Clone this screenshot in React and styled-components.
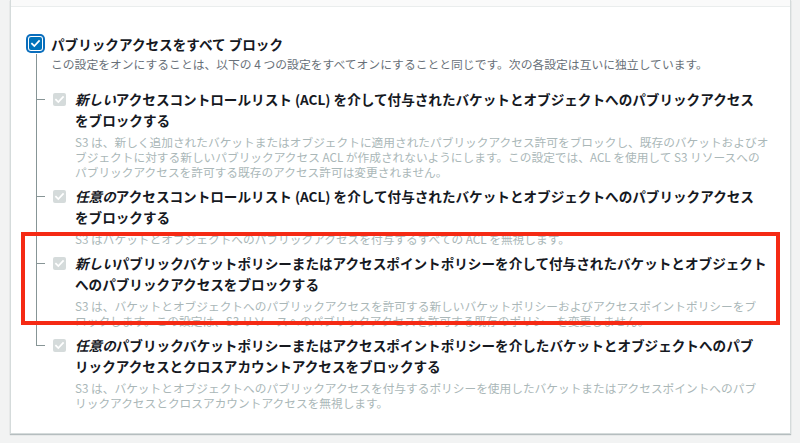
import React from "react";
import styled, { createGlobalStyle, css } from "styled-components";

const Global = createGlobalStyle`
  html, body { margin: 0; padding: 0; background: #f2f3f3; }
  body { font-family: "Noto Sans CJK JP", "Noto Sans", sans-serif; color: #16191f; }
  * { box-sizing: border-box; }
`;

const Page = styled.div`
  width: 800px;
  height: 443px;
  padding: 0 9px 0 10px;
  background: #f2f3f3;
  overflow: hidden;
`;

const Panel = styled.section`
  background: #ffffff;
  border: 1px solid #d5dbdb;
  border-top: none;
  box-shadow: 0 1px 1px 0 rgba(0, 28, 36, 0.25);
`;

const PanelHeader = styled.div`
  height: 7px;
  background: #fafafa;
  border-bottom: 1px solid #eaeded;
`;

const PanelBody = styled.div`
  padding: 27px 15px 23px 15px;
`;

const MainRow = styled.div`
  display: flex;
  align-items: flex-start;
  gap: 6px;
`;

const MainCheck = styled.span`
  flex-shrink: 0;
  width: 13px;
  height: 13px;
  margin: 3px 3px 0 3px;
  border-radius: 2px;
  background: #0073bb;
  box-shadow: 0 0 0 1px #ffffff, 0 0 0 3px #0a6ebd;
  display: flex;
  align-items: center;
  justify-content: center;
`;

const MainText = styled.div`
  display: flex;
  flex-direction: column;
`;

const MainTitle = styled.div`
  font-size: 13.6px;
  line-height: 21.5px;
  font-weight: 700;
  color: #16191f;
  white-space: nowrap;
`;

const MainDesc = styled.div`
  font-size: 11.8px;
  line-height: 15px;
  color: #687078;
  white-space: nowrap;
`;

const List = styled.ul`
  position: relative;
  list-style: none;
  margin: 0;
  padding: 0;
  &::before {
    content: "";
    position: absolute;
    left: 10px;
    top: -17px;
    height: 17px;
    width: 1px;
    background: #879596;
  }
`;

const Item = styled.li`
  --pt: ${(p) => (p.$first ? "18px" : "7px")};
  position: relative;
  display: flex;
  align-items: flex-start;
  gap: 9px;
  padding: var(--pt) 0 0 27px;
  &::before {
    content: "";
    position: absolute;
    left: 10px;
    top: 0;
    width: 1px;
    background: #879596;
    ${(p) =>
      p.$last
        ? css`height: calc(var(--pt) + 11px);`
        : css`bottom: 0;`}
  }
  &::after {
    content: "";
    position: absolute;
    left: 10px;
    top: calc(var(--pt) + 10.5px);
    width: 9px;
    height: 1px;
    background: #879596;
  }
`;

const HighlightFrame = styled.span`
  position: absolute;
  top: -14px;
  bottom: 3px;
  left: -5px;
  right: -5px;
  border: 4px solid #f52a14;
  pointer-events: none;
  z-index: 2;
`;

const ItemCheck = styled.span`
  flex-shrink: 0;
  width: 13px;
  height: 13px;
  margin-top: 4.25px;
  border-radius: 2px;
  background: #d5dbdb;
  display: flex;
  align-items: center;
  justify-content: center;
`;

const ItemBody = styled.div`
  display: flex;
  flex-direction: column;
`;

const ItemTitle = styled.div`
  font-size: 13.6px;
  line-height: 21.5px;
  font-weight: 700;
  color: #16191f;
  white-space: nowrap;
  em { font-style: italic; }
`;

const ItemDesc = styled.div`
  margin-top: 2px;
  font-size: 11.7px;
  line-height: 15px;
  color: #aab7b8;
  white-space: nowrap;
`;

const Check = ({ size = 11 }) => (
  <svg width={size} height={size} viewBox="0 0 14 14" fill="none">
    <path d="M2.5 7.2l3 3 6-6.4" stroke="#ffffff" strokeWidth="2.2" strokeLinecap="square" />
  </svg>
);

const items = [
  {
    em: "新しい",
    title: ["アクセスコントロールリスト (ACL) を介して付与されたバケットとオブジェクトへのパブリックアクセス", "をブロックする"],
    desc: [
      "S3 は、新しく追加されたバケットまたはオブジェクトに適用されたパブリックアクセス許可をブロックし、既存のバケットおよびオ",
      "ブジェクトに対する新しいパブリックアクセス ACL が作成されないようにします。この設定では、ACL を使用して S3 リソースへの",
      "パブリックアクセスを許可する既存のアクセス許可は変更されません。",
    ],
  },
  {
    em: "任意の",
    title: ["アクセスコントロールリスト (ACL) を介して付与されたバケットとオブジェクトへのパブリックアクセス", "をブロックする"],
    desc: ["S3 はバケットとオブジェクトへのパブリックアクセスを付与するすべての ACL を無視します。"],
  },
  {
    em: "新しい",
    highlight: true,
    title: ["パブリックバケットポリシーまたはアクセスポイントポリシーを介して付与されたバケットとオブジェクト", "へのパブリックアクセスをブロックする"],
    desc: [
      "S3 は、バケットとオブジェクトへのパブリックアクセスを許可する新しいバケットポリシーおよびアクセスポイントポリシーをブ",
      "ロックします。この設定は、S3 リソースへのパブリックアクセスを許可する既存のポリシーを変更しません。",
    ],
  },
  {
    em: "任意の",
    title: ["パブリックバケットポリシーまたはアクセスポイントポリシーを介したバケットとオブジェクトへのパブ", "リックアクセスとクロスアカウントアクセスをブロックする"],
    desc: [
      "S3 は、バケットとオブジェクトへのパブリックアクセスを付与するポリシーを使用したバケットまたはアクセスポイントへのパブ",
      "リックアクセスとクロスアカウントアクセスを無視します。",
    ],
  },
];

export default function App() {
  return (
    <>
      <Global />
      <Page>
        <Panel>
          <PanelHeader />
          <PanelBody>
            <MainRow>
              <MainCheck>
                <Check size={11} />
              </MainCheck>
              <MainText>
                <MainTitle>パブリックアクセスをすべて ブロック</MainTitle>
                <MainDesc>
                  この設定をオンにすることは、以下の 4 つの設定をすべてオンにすることと同じです。次の各設定は互いに独立しています。
                </MainDesc>
              </MainText>
            </MainRow>
            <List>
              {items.map((it, i) => (
                <Item key={i} $first={i === 0} $last={i === items.length - 1}>
                  {it.highlight && <HighlightFrame />}
                  <ItemCheck>
                    <Check size={11} />
                  </ItemCheck>
                  <ItemBody>
                    <ItemTitle>
                      <em>{it.em}</em>
                      {it.title[0]}
                      <br />
                      {it.title[1]}
                    </ItemTitle>
                    <ItemDesc>
                      {it.desc.map((d, j) => (
                        <React.Fragment key={j}>
                          {j > 0 && <br />}
                          {d}
                        </React.Fragment>
                      ))}
                    </ItemDesc>
                  </ItemBody>
                </Item>
              ))}
            </List>
          </PanelBody>
        </Panel>
      </Page>
    </>
  );
}
